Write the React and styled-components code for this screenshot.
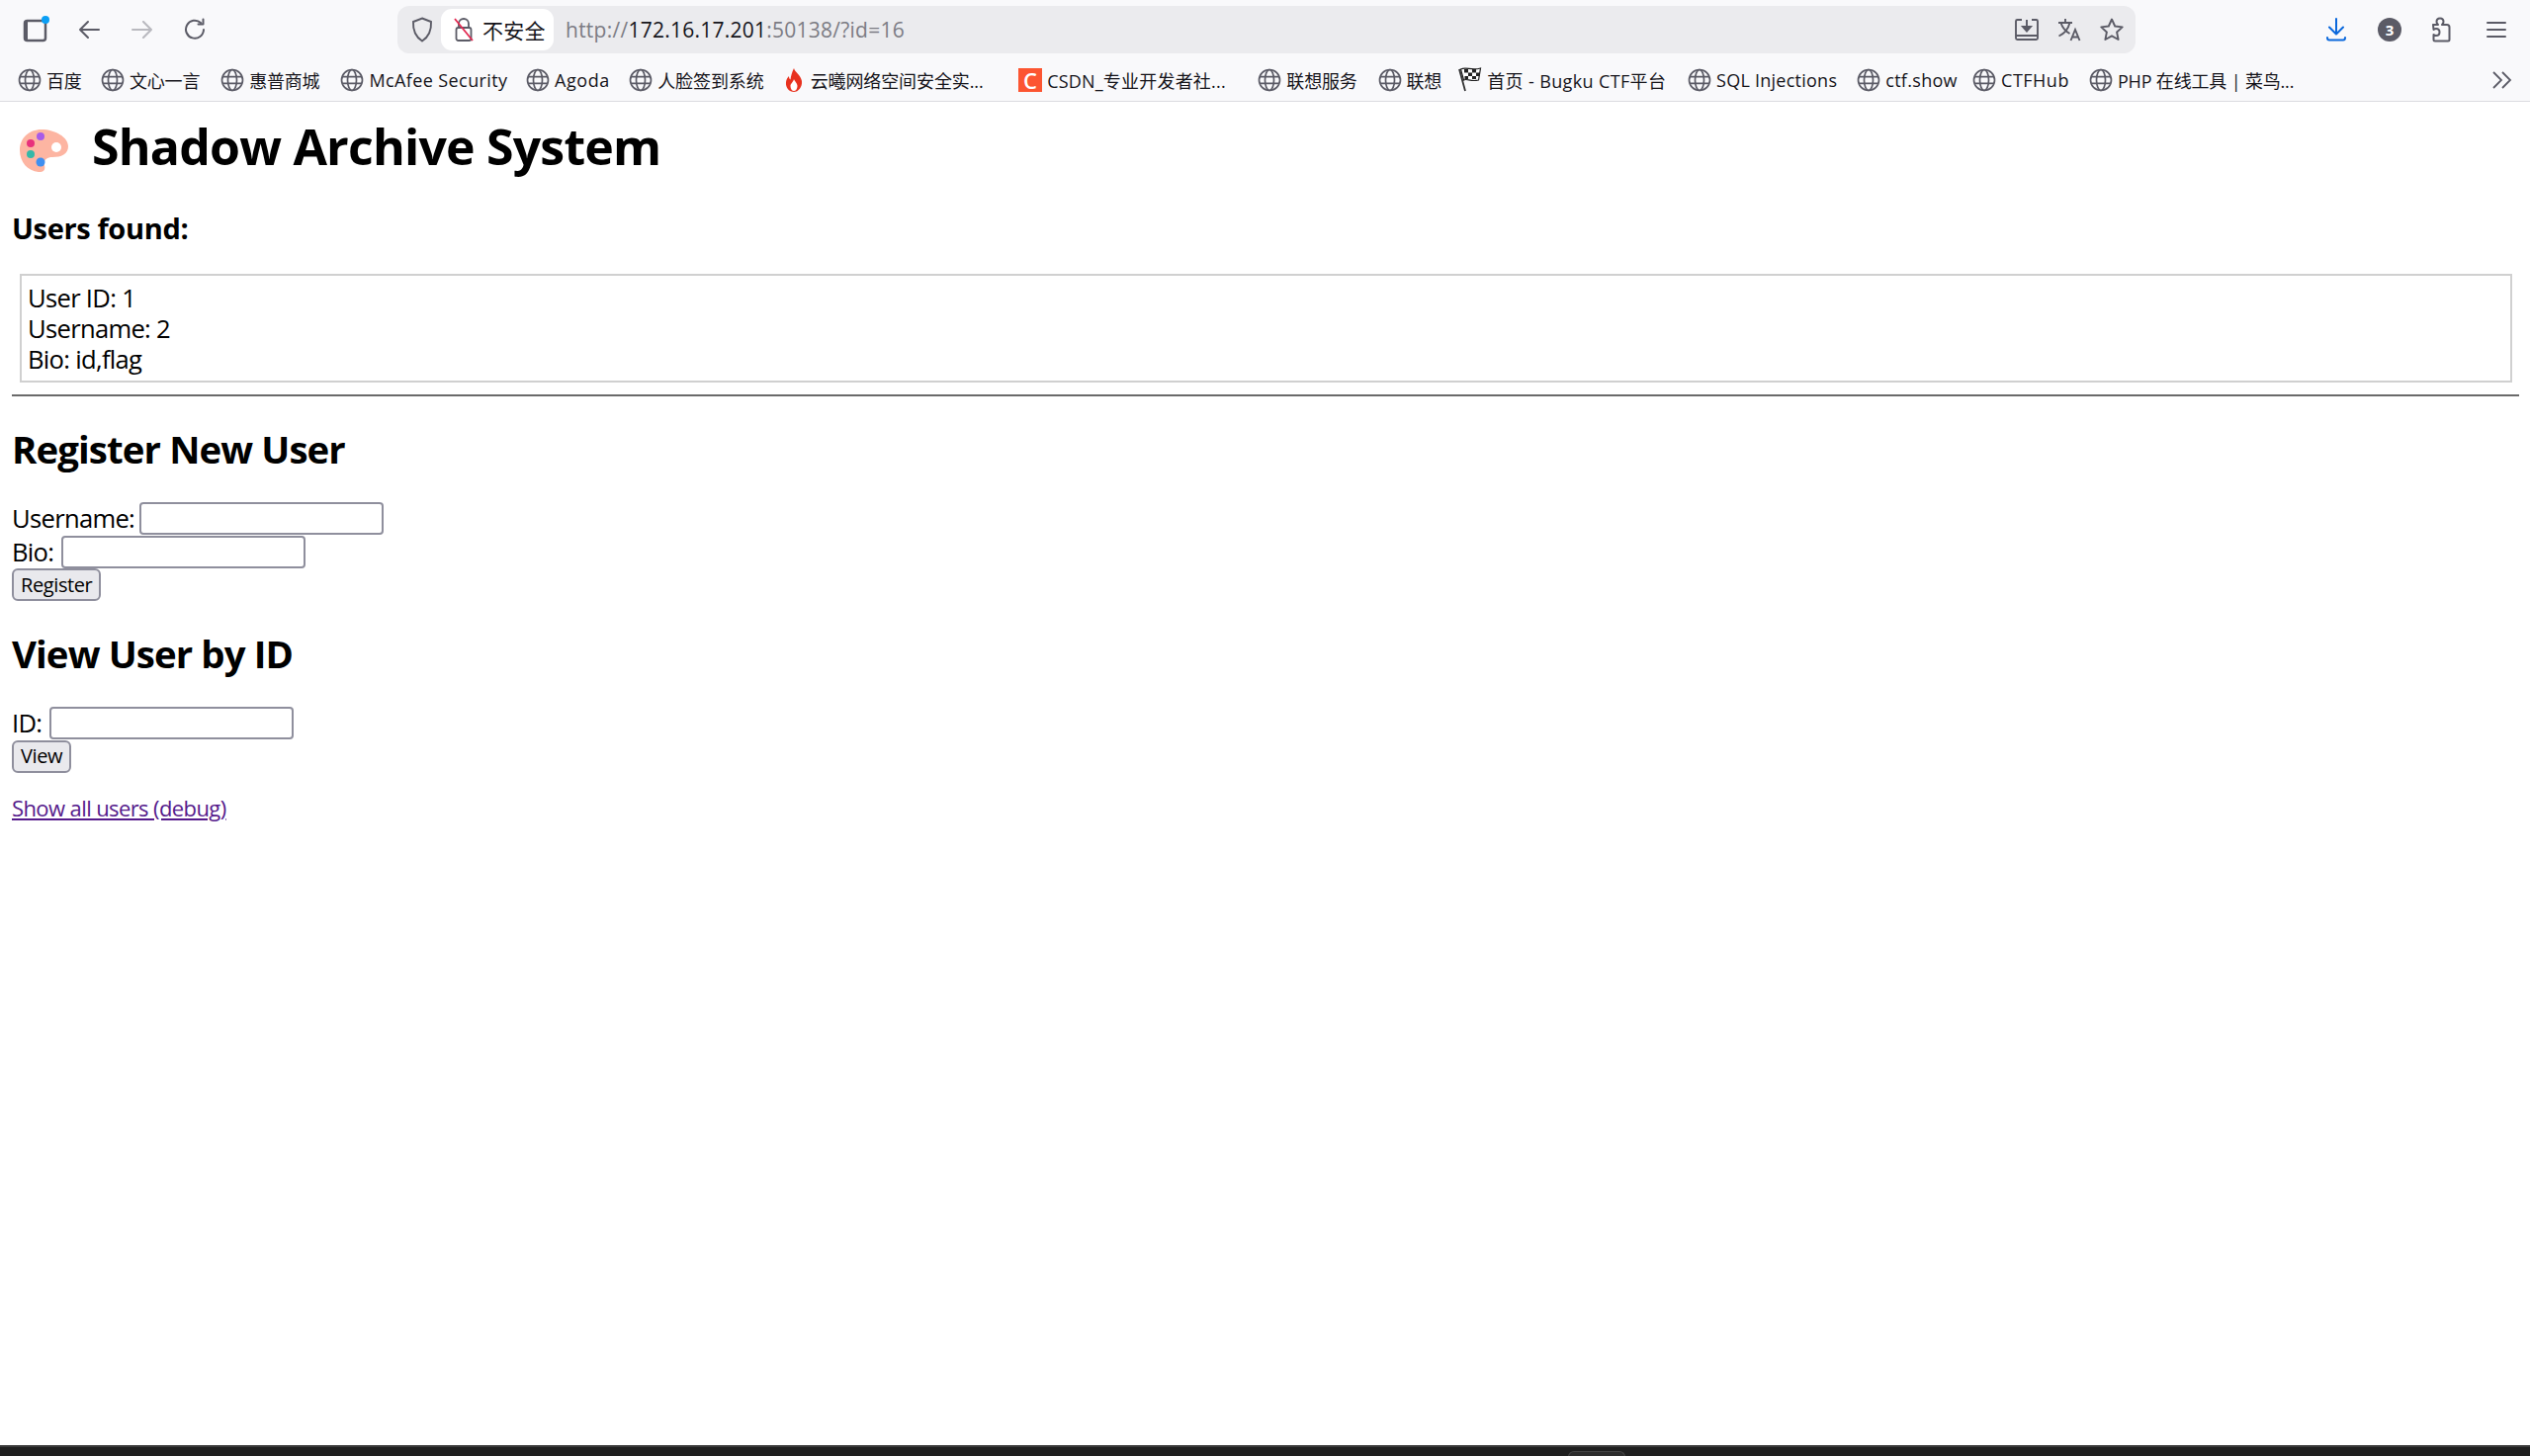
import React from 'react';
import styled, { createGlobalStyle } from 'styled-components';

const GlobalStyle = createGlobalStyle`
  html, body { margin: 0; padding: 0; background: #fff; }
  body { font-family: "Open Sans", "Noto Sans CJK SC", sans-serif; color: #000; }
`;

const Window = styled.div`
  height: 1473px;
  display: flex;
  flex-direction: column;
  overflow: hidden;
`;

const Toolbar = styled.div`
  height: 62px;
  flex: none;
  display: flex;
  align-items: center;
  padding: 0 7px 2px 9px;
  background: #f9f9fb;
  box-sizing: border-box;
`;

const Slot = styled.div`
  width: 54px;
  height: 48px;
  flex: none;
  display: flex;
  align-items: center;
  justify-content: center;
  color: ${p => p.$color || '#5b5b66'};
  opacity: ${p => p.$dim ? 0.4 : 1};
`;

const UrlBar = styled.div`
  width: 1758px;
  height: 48px;
  margin-left: 177px;
  flex: none;
  display: flex;
  align-items: center;
  padding: 0 12px 0 5px;
  box-sizing: border-box;
  background: #ebebee;
  border-radius: 12px;
`;

const ShieldSlot = styled.div`
  width: 39px;
  flex: none;
  display: flex;
  justify-content: center;
  color: #5b5b66;
`;

const SecurityPill = styled.div`
  height: 42px;
  width: 114px;
  flex: none;
  display: flex;
  align-items: center;
  gap: 9px;
  padding-left: 13px;
  box-sizing: border-box;
  background: #fff;
  border-radius: 11px;
  font-size: 21px;
  letter-spacing: 0.3px;
  color: #15141a;
  white-space: nowrap;
`;

const UrlText = styled.div`
  margin-left: 12px;
  font-size: 21px;
  letter-spacing: 0.25px;
  color: #7c7c84;
  white-space: nowrap;
`;

const Host = styled.span`
  color: #15141a;
`;

const PageActions = styled.div`
  margin-left: auto;
  display: flex;
  align-items: center;
  gap: 19px;
  color: #5b5b66;
`;

const RightTools = styled.div`
  margin-left: auto;
  display: flex;
`;

const Badge = styled.div`
  width: 24px;
  height: 24px;
  border-radius: 50%;
  background: #5b5b66;
  color: #fff;
  font-size: 15px;
  font-weight: 700;
  display: flex;
  align-items: center;
  justify-content: center;
`;

const Bookmarks = styled.div`
  height: 41px;
  flex: none;
  display: flex;
  align-items: center;
  padding: 0 18px 3px 18px;
  box-sizing: border-box;
  background: #f9f9fb;
  border-bottom: 1px solid #dcdce0;
`;

const Bookmark = styled.div`
  display: flex;
  align-items: center;
  gap: 5px;
  margin-right: ${p => p.$gap}px;
  font-size: 18px;
  letter-spacing: ${p => p.$ls}px;
  color: #15141a;
  white-space: nowrap;
  flex: none;
  svg { flex: none; }
`;

const CsdnIcon = styled.span`
  width: 24px;
  height: 24px;
  background: #fc5531;
  color: #fff;
  font-size: 22px;
  line-height: 24px;
  text-align: center;
  font-weight: 600;
`;

const More = styled.div`
  margin-left: auto;
  display: flex;
  color: #5b5b66;
`;

const Page = styled.main`
  flex: 1;
  padding: 0 12px;
  font-size: 25.6px;
  line-height: 31px;
`;

const Title = styled.h1`
  margin: 10px 0 0;
  height: 70px;
  display: flex;
  align-items: center;
  gap: 23px;
  padding-left: 8px;
  font-size: 50px;
  font-weight: 700;
  line-height: 70px;
  letter-spacing: -0.8px;
  white-space: nowrap;
  svg { margin-top: 8px; }
`;

const Subtitle = styled.h3`
  margin: 27px 0 0;
  font-size: 29px;
  font-weight: 700;
  line-height: 42px;
  letter-spacing: -0.35px;
`;

const UserCard = styled.div`
  margin: 25px 6px 0 8px;
  height: 110px;
  box-sizing: border-box;
  padding: 7px 6px;
  border: 2px solid #d0d0d0;
  letter-spacing: -0.7px;
`;

const Rule = styled.hr`
  margin: 12px -1px 0 0;
  height: 0;
  border: 0;
  border-top: 2px solid #6a6a6a;
`;

const SectionTitle = styled.h2`
  margin: ${p => p.$top}px 0 0;
  font-size: 38.4px;
  font-weight: 700;
  line-height: 52px;
  letter-spacing: -0.9px;
`;

const Form = styled.form`
  margin-top: ${p => p.$top}px;
  display: flex;
  flex-direction: column;
  align-items: flex-start;
  gap: 0.5px;
`;

const Field = styled.label`
  height: 33px;
  display: flex;
  align-items: center;
  gap: ${p => p.$gap}px;
  letter-spacing: -0.7px;
`;

const Input = styled.input`
  width: 247px;
  height: 33px;
  box-sizing: border-box;
  border: 2px solid #8f8f9d;
  border-radius: 4px;
  background: #fff;
  padding: 2px;
`;

const Button = styled.button`
  height: 33px;
  padding: 0 7px;
  box-sizing: border-box;
  border: 2px solid #8f8f9d;
  border-radius: 6px;
  background: #e9e9ed;
  color: #000;
  font-family: inherit;
  font-size: 20px;
  letter-spacing: -0.4px;
  line-height: 1;
`;

const DebugLink = styled.a`
  display: inline-block;
  margin-top: 20px;
  font-size: 22px;
  line-height: 30px;
  letter-spacing: -0.6px;
  color: #551a8b;
`;

const Taskbar = styled.div`
  height: 11px;
  flex: none;
  box-sizing: border-box;
  padding: 4px 0 0 1586px;
  background: #1f1f1f;
  border-top: 2px solid #3a3a3a;
`;

const TaskbarTab = styled.div`
  width: 58px;
  height: 6px;
  box-sizing: border-box;
  border: 1px solid #444;
  border-bottom: 0;
  border-radius: 6px 6px 0 0;
  background: #2c2c2c;
`;

const Globe = () => (
  <svg width="24" height="24" viewBox="0 0 24 24" fill="none" stroke="#5b5b66" strokeWidth="1.7">
    <circle cx="12" cy="12" r="10.5" />
    <ellipse cx="12" cy="12" rx="4.5" ry="10.5" />
    <path d="M2.2 8.6h19.6M2.2 15.4h19.6" />
  </svg>
);

const Flame = () => (
  <svg width="24" height="26" viewBox="0 0 24 26">
    <path d="M12 1c1 4 7 7 8 13 .7 6-3.500 11-8 11S3.300 21 4 15c.3-3 2-5 3-6 0 2 .5 3 1.500 3.500C9 9 10 5 12 1z" fill="#e8321f" />
    <path d="M12 12c.5 2 3.500 4 3.500 7 0 3-1.700 5-3.500 5s-3.500-2-3.500-5c0-2.500 3-4 3.500-7z" fill="#fff" />
  </svg>
);

const Flag = () => (
  <svg width="24" height="28" viewBox="0 0 24 28">
    <path d="M1 3l6 22" stroke="#333" strokeWidth="1.800" fill="none" />
    <path d="M2.500 3c6-3 10 2 20-1l-2 12c-8 2-12-2-15 0z" fill="#fff" stroke="#222" strokeWidth="1.200" />
    <path d="M6 3h4v3.500H6zM14 3h4v3.500h-4zM10 6.500h4V10h-4zM18 6.500h3.500V10H18zM6.500 10h3.500v3h-3.500zM14 10h4v3h-4z" fill="#222" />
  </svg>
);

const Palette = () => (
  <svg width="50" height="44" viewBox="0 0 50 44">
    <path d="M22 1C9 1 0 10 0 22c0 12 8 21 19 22 6 .5 7-3 6-7-1-5 2-8 8-8 9 0 16-3 16-11C49 9 36 1 22 1z" fill="#fdb5a2" />
    <circle cx="37" cy="19" r="5" fill="#fff" />
    <circle cx="21" cy="8" r="4" fill="#a85be8" />
    <circle cx="11" cy="15" r="4" fill="#e8327c" />
    <circle cx="11" cy="26" r="4" fill="#35b8a8" />
    <circle cx="21" cy="34" r="4.500" fill="#3f8ff0" />
  </svg>
);

const bookmarks = [
  { label: '百度', gap: 19.4, ls: -0.2 },
  { label: '文心一言', gap: 21, ls: -0.2 },
  { label: '惠普商城', gap: 21, ls: -0.2 },
  { label: 'McAfee Security', gap: 18.4, ls: 0.4 },
  { label: 'Agoda', gap: 19.3, ls: 0.6 },
  { label: '人脸签到系统', gap: 18, ls: -0.1 },
  { label: '云曦网络空间安全实...', gap: 35.5, ls: -0.1, icon: <Flame /> },
  { label: 'CSDN_专业开发者社...', gap: 32.5, ls: 0.2, icon: <CsdnIcon>C</CsdnIcon> },
  { label: '联想服务', gap: 21, ls: -0.2 },
  { label: '联想', gap: 17, ls: -0.2 },
  { label: '首页 - Bugku CTF平台', gap: 21.7, ls: 0.37, icon: <Flag /> },
  { label: 'SQL Injections', gap: 20, ls: 0.25 },
  { label: 'ctf.show', gap: 15.2, ls: 0.3 },
  { label: 'CTFHub', gap: 20, ls: 0.5 },
  { label: 'PHP 在线工具 | 菜鸟...', gap: 0, ls: -0.17 },
];

export default function App() {
  return (
    <Window>
      <GlobalStyle />
      <Toolbar>
        <Slot>
          <svg width="30" height="30" viewBox="0 0 30 30" fill="none">
            <rect x="4" y="6" width="21" height="20" rx="2.500" stroke="#5b5b66" strokeWidth="2.500" />
            <rect x="4" y="6" width="3" height="20" fill="#5b5b66" />
            <circle cx="25" cy="5" r="4" fill="#0a9ff5" />
          </svg>
        </Slot>
        <Slot>
          <svg width="24" height="24" viewBox="0 0 24 24" fill="none" stroke="currentColor" strokeWidth="2" strokeLinecap="round" strokeLinejoin="round"><path d="M22 12H3M11 4l-8 8 8 8" /></svg>
        </Slot>
        <Slot $dim>
          <svg width="24" height="24" viewBox="0 0 24 24" fill="none" stroke="currentColor" strokeWidth="2" strokeLinecap="round" strokeLinejoin="round"><path d="M2 12h19M13 4l8 8-8 8" /></svg>
        </Slot>
        <Slot>
          <svg width="24" height="24" viewBox="0 0 24 24" fill="none" stroke="currentColor" strokeWidth="2" strokeLinecap="round" strokeLinejoin="round"><path d="M20 12a9 9 0 1 1-3-7" /><path d="M19.500 1.500v5h-5" /></svg>
        </Slot>
        <UrlBar>
          <ShieldSlot>
            <svg width="22" height="26" viewBox="0 0 22 26" fill="none" stroke="currentColor" strokeWidth="1.900"><path d="M11 1.500 20 5c.5 9-2 15-9 19.500C4 20 1.500 14 2 5z" /></svg>
          </ShieldSlot>
          <SecurityPill>
            <svg width="20" height="28" viewBox="0 0 20 28" fill="none">
              <path d="M5 12V8a5 5 0 0 1 10 0v4" stroke="#5b5b66" strokeWidth="1.800" />
              <rect x="2.500" y="12" width="15" height="13" rx="2" stroke="#5b5b66" strokeWidth="1.800" />
              <path d="M1 3l18 22" stroke="#e22850" strokeWidth="1.800" />
            </svg>
            不安全
          </SecurityPill>
          <UrlText>http://<Host>172.16.17.201</Host>:50138/?id=16</UrlText>
          <PageActions>
            <svg width="24" height="24" viewBox="0 0 24 24" fill="none" stroke="currentColor" strokeWidth="1.900"><path d="M7 2H2.500A1.500 1.500 0 0 0 1 3.500v17A1.500 1.500 0 0 0 2.500 22h19a1.500 1.500 0 0 0 1.500-1.500v-17A1.500 1.500 0 0 0 21.500 2H17M1 18h22" /><path d="M12 2v10" /><path d="M8 9h8l-4 4.500z" fill="currentColor" /></svg>
            <svg width="24" height="24" viewBox="0 0 24 24" fill="none" stroke="currentColor" strokeWidth="1.900"><path d="M1 5h14M8 1v4M12.500 5C11 11 7 16 1.500 18.500M3.500 5C5 10 9 14 12.500 16" /><path d="M13.500 23l4.500-11 4.500 11M15 19.500h6" /></svg>
            <svg width="24" height="24" viewBox="0 0 24 24" fill="none" stroke="currentColor" strokeWidth="1.900" strokeLinejoin="round"><path d="M12 1.500l3.200 7 7.500.9-5.600 5.100 1.500 7.500L12 18.300 5.400 22l1.500-7.500L1.300 9.400l7.500-.9z" /></svg>
          </PageActions>
        </UrlBar>
        <RightTools>
          <Slot $color="#0a68dc">
            <svg width="22" height="26" viewBox="0 0 22 26" fill="none" stroke="currentColor" strokeWidth="2" strokeLinecap="round" strokeLinejoin="round"><path d="M11 2v15M4 10.500l7 7 7-7M2 21c0 1.500.5 2.500 2 2.500h14c1.500 0 2-1 2-2.500" /></svg>
          </Slot>
          <Slot><Badge>3</Badge></Slot>
          <Slot>
            <svg width="24" height="26" viewBox="0 0 24 26" fill="none" stroke="currentColor" strokeWidth="2" strokeLinejoin="round"><path d="M2 8h5c-1-1-1.500-2-1.500-3C5.500 3 7 1.500 9 1.500s3.500 1.500 3.500 3.500c0 1-.5 2-1.500 3h5c1.500 0 2.500 1 2.500 2.500V23c0 1-.5 1.500-1.500 1.500H4c-1 0-1.500-.5-1.500-1.500v-5c1 .8 1.500 1 2.500 1 2 0 3.500-1.500 3.500-3.500S7 12 5 12c-1 0-1.500.3-2.500 1z" /></svg>
          </Slot>
          <Slot>
            <svg width="20" height="18" viewBox="0 0 20 18" stroke="currentColor" strokeWidth="2" strokeLinecap="round"><path d="M1 2h18M1 9h18M1 16h18" /></svg>
          </Slot>
        </RightTools>
      </Toolbar>
      <Bookmarks>
        {bookmarks.map(b => (
          <Bookmark key={b.label} $gap={b.gap} $ls={b.ls}>
            {b.icon || <Globe />}
            {b.label}
          </Bookmark>
        ))}
        <More>
          <svg width="20" height="18" viewBox="0 0 20 18" fill="none" stroke="currentColor" strokeWidth="1.800"><path d="M1 1l8 8-8 8M10 1l8 8-8 8" /></svg>
        </More>
      </Bookmarks>
      <Page>
        <Title><Palette />Shadow Archive System</Title>
        <Subtitle>Users found:</Subtitle>
        <UserCard>
          User ID: 1<br />
          Username: 2<br />
          Bio: id,flag
        </UserCard>
        <Rule />
        <SectionTitle $top={27}>Register New User</SectionTitle>
        <Form $top={28}>
          <Field $gap={4.5}>Username: <Input type="text" /></Field>
          <Field $gap={8}>Bio: <Input type="text" /></Field>
          <Button type="button">Register</Button>
        </Form>
        <SectionTitle $top={27}>View User by ID</SectionTitle>
        <Form $top={28}>
          <Field $gap={8}>ID: <Input type="text" /></Field>
          <Button type="button">View</Button>
        </Form>
        <DebugLink href="#">Show all users (debug)</DebugLink>
      </Page>
      <Taskbar><TaskbarTab /></Taskbar>
    </Window>
  );
}
